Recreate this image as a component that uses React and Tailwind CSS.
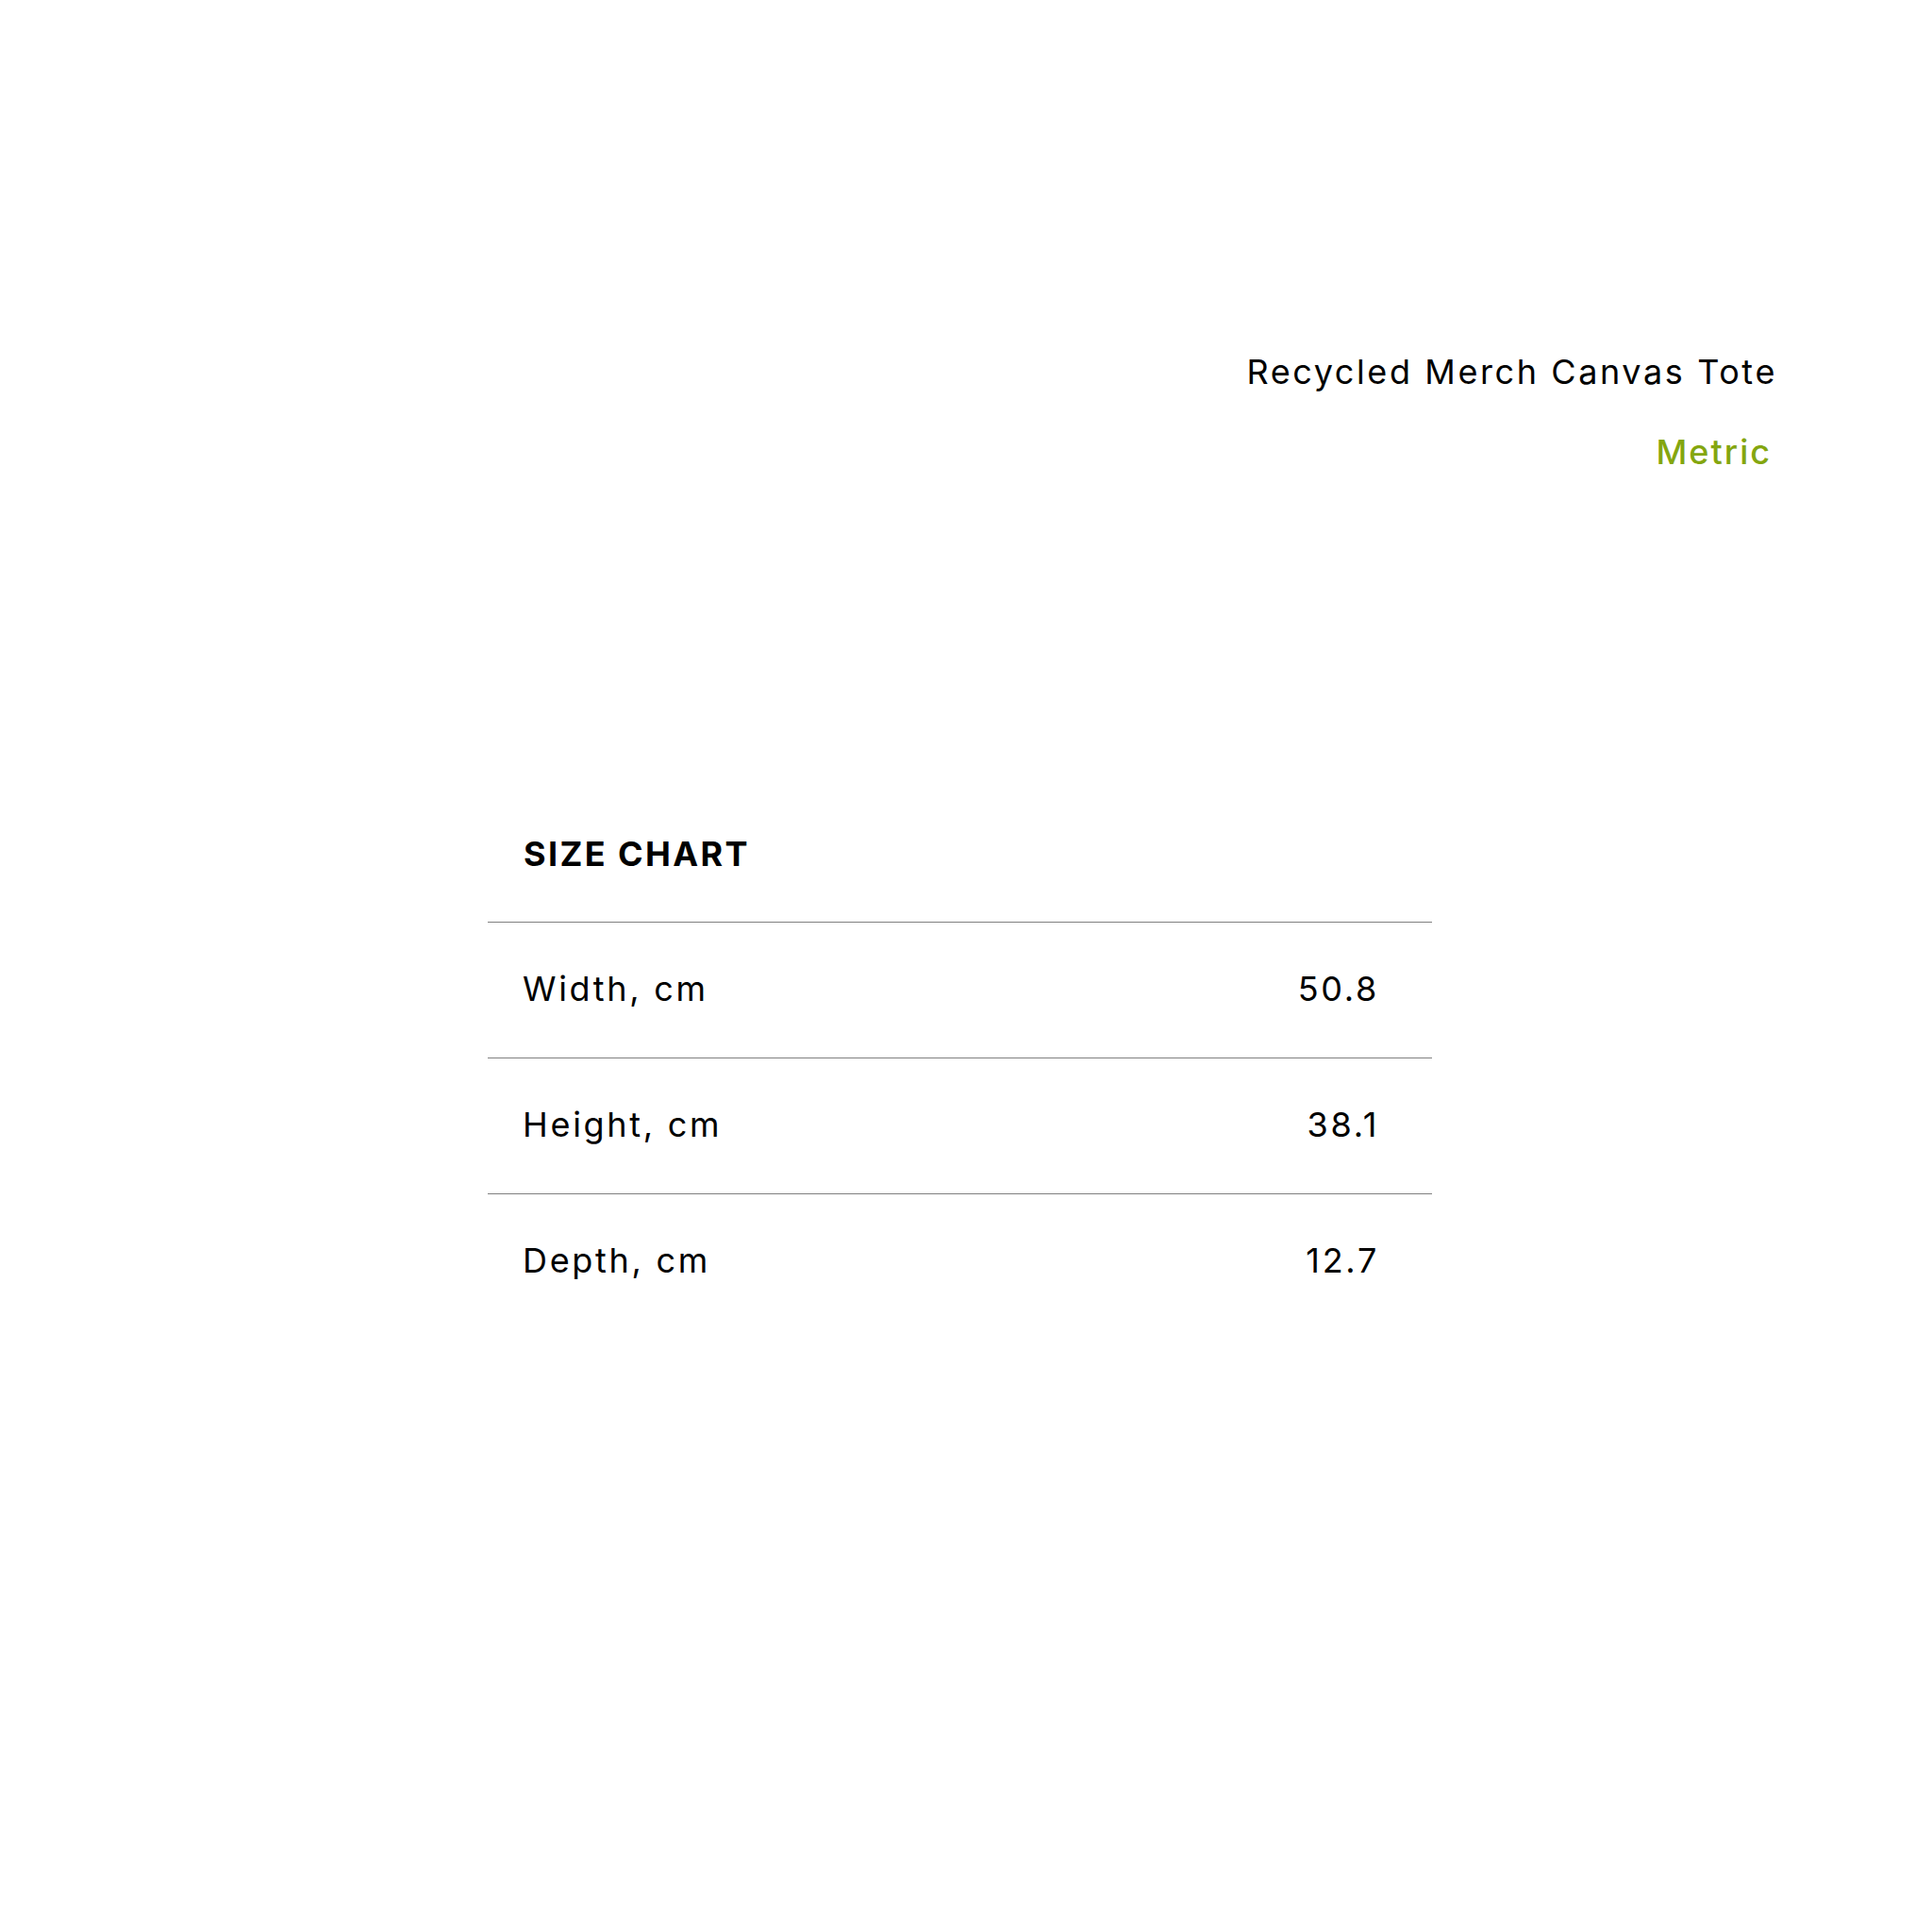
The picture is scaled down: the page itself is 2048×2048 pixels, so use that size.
import React from "react";

const rows = [
  { label: "Width, cm", value: "50.8" },
  { label: "Height, cm", value: "38.1" },
  { label: "Depth, cm", value: "12.7" },
];

export default function App() {
  return (
    <div className="w-[2048px] h-[2048px] bg-white text-black font-['Inter',sans-serif]">
      {/* product header */}
      <div className="flex flex-col items-end pt-[374px] pr-[164px]">
        <h1 className="text-[36px] leading-[40px] font-normal tracking-[2.6px]">Recycled Merch Canvas Tote</h1>
        <p className="mt-[45px] mr-[6px] text-[36px] leading-[40px] font-medium tracking-[2px] text-[#84a60f]">Metric</p>
      </div>

      {/* size chart */}
      <div className="ml-[517px] w-[1001px] mt-[386px]">
        <h2 className="pl-[38px] text-[36px] leading-[40px] font-bold tracking-[2.4px]">SIZE CHART</h2>
        <div className="mt-[52px]">
          {rows.map((row) => (
            <div key={row.label} className="h-[144px] pb-[3px] border-t border-[#808080] flex items-center justify-between pl-[37px] pr-[56px] text-[36px] tracking-[2.7px]">
              <span>{row.label}</span>
              <span>{row.value}</span>
            </div>
          ))}
        </div>
      </div>
    </div>
  );
}
